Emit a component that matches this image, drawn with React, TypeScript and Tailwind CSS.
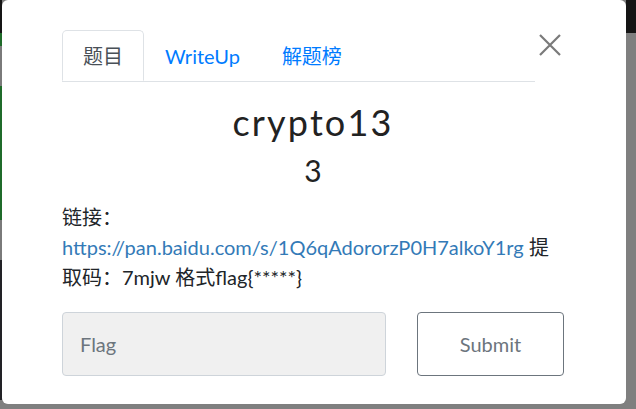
export default function App() {
  const font = { fontFamily: 'Lato, "Noto Sans CJK SC", sans-serif' }
  return (
    <div className="flex h-[409px] w-[636px] overflow-hidden bg-[#7f7f7f]" style={font}>
      {/* backdrop strip, left */}
      <div className="flex w-[2px] flex-col">
        <div className="h-[33px] bg-[#151515]" />
        <div className="h-[13px] bg-[#1f6b2a]" />
        <div className="h-[40px] bg-[#7a7a7a]" />
        <div className="h-[134px] bg-[#1f6b2a]" />
        <div className="h-[40px] bg-[#7a7a7a]" />
        <div className="h-[140px] bg-[#222226]" />
      </div>

      {/* modal */}
      <div className="flex h-[404px] w-[624px] flex-col rounded-[6px] bg-white px-[60px] pt-[30px]">
        <div className="flex">
          <ul className="flex w-[473px] border-b border-[#dee2e6]">
            <li className="-mb-px flex h-[51px] items-center rounded-t-[5px] border border-b-white border-[#dee2e6] px-[20px] text-[20px] text-[#495057]">
              题目
            </li>
            <li className="flex h-[51px] items-center px-[21px] text-[20px] text-[#007bff]">WriteUp</li>
            <li className="flex h-[51px] items-center px-[21px] text-[20px] text-[#007bff]">解题榜</li>
          </ul>
          <button className="ml-[4px] mt-[4px] flex h-[22px] w-[22px] items-center justify-center">
            <svg width="22" height="22" viewBox="0 0 22 22" fill="none" stroke="#7a7a7a" strokeWidth="2.2">
              <path d="M1 1 L21 21 M21 1 L1 21" />
            </svg>
          </button>
        </div>

        <div className="w-[502px]">
          <h3 className="mt-[18px] text-center text-[36px] leading-[44px] tracking-[0.06em] text-[#222]">crypto13</h3>
          <h4 className="mt-[6px] text-center text-[30px] leading-[40px] text-[#222]">3</h4>
          <p className="mt-[12px] text-[20px] leading-[30px] text-[#212529]">
            链接：
            <a className="text-[#337ab7]">https://pan.baidu.com/s/1Q6qAdororzP0H7alkoY1rg</a> 提取码：7mjw 格式flag{"{*****}"}
          </p>

          <div className="mt-[20px] flex items-center justify-between">
            <input
              placeholder="Flag"
              className="h-[64px] w-[324px] rounded-[4px] border border-[#ced4da] bg-[#f0f0f0] px-[17px] text-[20px] text-[#495057] placeholder:text-[#6c757d]"
            />
            <button className="h-[64px] w-[147px] rounded-[4px] border border-[#6c757d] text-[20px] text-[#6c757d]">
              Submit
            </button>
          </div>
        </div>
      </div>

      {/* backdrop strip, right */}
      <div className="flex w-[10px] flex-col">
        <div className="h-[33px] bg-[#151515]" />
        <div className="flex-1 bg-[#7f7f7f]" />
      </div>
    </div>
  )
}
